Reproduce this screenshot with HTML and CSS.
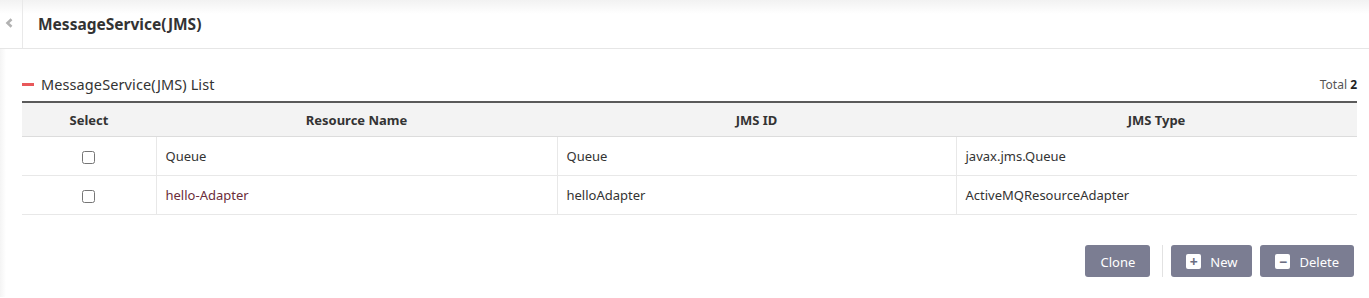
FILE: index.html
```html
<!DOCTYPE html>
<html lang="en">
<head>
    <meta charset="UTF-8">
    <title>MessageService(JMS)</title>
    <link rel="stylesheet" href="styles.css">
</head>
<body>
    <div class="page-header">
        <button class="collapse-btn" aria-label="Collapse">
            <svg viewBox="0 0 8 10" width="8" height="10"><path d="M6.5 1.2 L2.5 5 L6.5 8.8" fill="none" stroke="#b2b2b2" stroke-width="2.6"/></svg>
        </button>
        <h1>MessageService(JMS)</h1>
    </div>

    <div class="content">
        <div class="section-head">
            <h2><span class="dash"></span>MessageService(JMS) List</h2>
            <div class="total">Total <b>2</b></div>
        </div>

        <table class="list">
            <thead>
                <tr>
                    <th class="col-select">Select</th>
                    <th class="col-name">Resource Name</th>
                    <th class="col-id">JMS ID</th>
                    <th class="col-type">JMS Type</th>
                </tr>
            </thead>
            <tbody>
                <tr>
                    <td class="center"><input type="checkbox"></td>
                    <td>Queue</td>
                    <td>Queue</td>
                    <td>javax.jms.Queue</td>
                </tr>
                <tr>
                    <td class="center"><input type="checkbox"></td>
                    <td class="link">hello-Adapter</td>
                    <td>helloAdapter</td>
                    <td>ActiveMQResourceAdapter</td>
                </tr>
            </tbody>
        </table>

        <div class="actions">
            <button class="btn">Clone</button>
            <span class="sep"></span>
            <button class="btn"><span class="ico">+</span>New</button>
            <button class="btn"><span class="ico">&minus;</span>Delete</button>
        </div>
    </div>
</body>
</html>
```

FILE: styles.css
```css
body {
    margin: 0;
    background: #fff;
    font-family: "Noto Sans", "Noto Sans CJK KR", sans-serif;
    color: #333;
}

.page-header {
    display: flex;
    align-items: center;
    height: 48px;
    border-bottom: 1px solid #e6e6e6;
    background: linear-gradient(#f2f2f2 0, #fff 14px);
}

.collapse-btn {
    display: flex;
    align-items: center;
    width: 23px;
    height: 48px;
    padding: 0 0 2px 5px;
    border: none;
    border-right: 1px solid #e9e9e9;
    background: transparent;
}

h1 {
    margin: 0 0 0 15px;
    font-size: 15.5px;
    font-weight: 700;
    color: #333;
}

.content {
    padding: 24px 12px 20px 22px;
    background: linear-gradient(90deg, #f4f4f4 0, #fff 6px);
}

.section-head {
    display: flex;
    align-items: center;
    justify-content: space-between;
    height: 22px;
    margin-bottom: 6px;
}

h2 {
    display: flex;
    align-items: center;
    margin: 0;
    font-size: 14.5px;
    font-weight: 400;
    letter-spacing: 0.1px;
    color: #333;
}

.dash {
    width: 12px;
    height: 3px;
    margin-right: 7px;
    background: #e8585a;
}

.total {
    font-size: 12px;
    color: #555;
    padding-top: 1px;
}

.total b {
    color: #222;
}

.list {
    width: 100%;
    table-layout: fixed;
    border-collapse: collapse;
    border-top: 2px solid #5a5a5a;
    font-size: 13px;
}

.list th {
    height: 33px;
    padding: 0;
    background: #f3f3f3;
    border-bottom: 1px solid #dcdcdc;
    font-weight: 700;
    font-size: 13px;
    color: #333;
}

.col-select { width: 134px; }
.col-name { width: 401px; }
.col-id { width: 399px; }

.list td {
    height: 38px;
    padding: 0 9px;
    border-bottom: 1px solid #e8e8e8;
    border-left: 1px solid #e8e8e8;
    color: #333;
}

.list td:first-child {
    border-left: none;
}

.list td.center {
    text-align: center;
    padding: 0;
}

.list td.link {
    color: #6b2d3a;
}

.list input[type="checkbox"] {
    width: 13px;
    height: 13px;
    margin: 0;
    vertical-align: middle;
}

.actions {
    display: flex;
    justify-content: flex-end;
    align-items: center;
    gap: 8px;
    margin-top: 30px;
    padding-right: 3px;
}

.btn {
    display: flex;
    align-items: center;
    height: 32px;
    padding: 1px 15px 0;
    border: none;
    border-radius: 3px;
    background: #7b7d92;
    color: #fff;
    font-family: inherit;
    font-size: 13px;
}

.sep {
    width: 1px;
    height: 32px;
    margin-left: 4px;
    background: #e2e2e2;
}

.ico {
    display: inline-flex;
    align-items: center;
    justify-content: center;
    width: 15px;
    height: 15px;
    margin-right: 9px;
    border-radius: 2px;
    background: #fff;
    color: #6c6e82;
    font-size: 14px;
    font-weight: 700;
    line-height: 1;
}
```
